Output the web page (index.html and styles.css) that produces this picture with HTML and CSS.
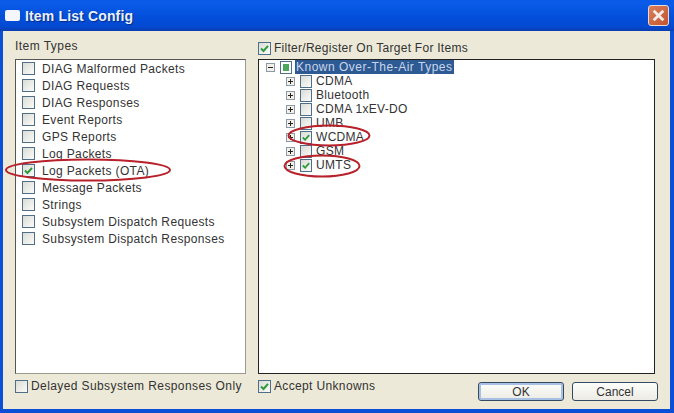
FILE: index.html
```html
<!DOCTYPE html>
<html lang="en">
<head>
  <meta charset="UTF-8" />
  <title>Item List Config</title>
  <link rel="stylesheet" href="styles.css">
</head>
<body>
  <div class="window">
    <div class="titlebar">
      <span class="title-icon"></span>
      <span class="title-text">Item List Config</span>
      <span class="close-btn">
        <svg width="15" height="15" viewBox="0 0 14 14"><path d="M2.5 2.5L11.5 11.5M11.5 2.5L2.5 11.5" stroke="#f4ece6" stroke-width="2.6"/></svg>
      </span>
    </div>

    <div class="client">
      <!-- Top labels -->
      <div class="label">Item Types</div>
      <div class="check-row top-check">
        <span class="box on"><svg width="11" height="11" viewBox="0 0 11 11"><path class="tick" d="M2 5.5L4.5 8L9 2.8"/></svg></span>
        <span>Filter/Register On Target For Items</span>
      </div>

      <!-- Item types list -->
      <div class="panel list">
        <div class="list-row"><span class="box"></span>DIAG Malformed Packets</div>
        <div class="list-row"><span class="box"></span>DIAG Requests</div>
        <div class="list-row"><span class="box"></span>DIAG Responses</div>
        <div class="list-row"><span class="box"></span>Event Reports</div>
        <div class="list-row"><span class="box"></span>GPS Reports</div>
        <div class="list-row"><span class="box"></span>Log Packets</div>
        <div class="list-row"><span class="box on"><svg width="11" height="11" viewBox="0 0 11 11"><path class="tick" d="M2 5.5L4.5 8L9 2.8"/></svg></span>Log Packets (OTA)</div>
        <div class="list-row"><span class="box"></span>Message Packets</div>
        <div class="list-row"><span class="box"></span>Strings</div>
        <div class="list-row"><span class="box"></span>Subsystem Dispatch Requests</div>
        <div class="list-row"><span class="box"></span>Subsystem Dispatch Responses</div>
      </div>

      <!-- Tree -->
      <div class="panel tree">
        <div class="tree-row root">
          <span class="exp minus"></span>
          <span class="box mixed"></span>
          <span class="selected">Known Over-The-Air Types</span>
        </div>
        <div class="tree-row"><span class="exp"></span><span class="box"></span>CDMA</div>
        <div class="tree-row"><span class="exp"></span><span class="box"></span>Bluetooth</div>
        <div class="tree-row"><span class="exp"></span><span class="box"></span>CDMA 1xEV-DO</div>
        <div class="tree-row"><span class="exp"></span><span class="box"></span>UMB</div>
        <div class="tree-row"><span class="exp"></span><span class="box on"><svg width="11" height="11" viewBox="0 0 11 11"><path class="tick" d="M2 5.5L4.5 8L9 2.8"/></svg></span>WCDMA</div>
        <div class="tree-row"><span class="exp"></span><span class="box"></span>GSM</div>
        <div class="tree-row"><span class="exp"></span><span class="box on"><svg width="11" height="11" viewBox="0 0 11 11"><path class="tick" d="M2 5.5L4.5 8L9 2.8"/></svg></span>UMTS</div>
      </div>

      <!-- Bottom row -->
      <div class="check-row bottom"><span class="box"></span><span>Delayed Subsystem Responses Only</span></div>
      <div class="footer">
        <div class="check-row accept"><span class="box on"><svg width="11" height="11" viewBox="0 0 11 11"><path class="tick" d="M2 5.5L4.5 8L9 2.8"/></svg></span><span>Accept Unknowns</span></div>
        <div class="buttons">
          <button class="default">OK</button>
          <button>Cancel</button>
        </div>
      </div>
    </div>

    <!-- Red hand-drawn markup over the dialog -->
    <svg class="markup" width="674" height="413" viewBox="0 0 674 413">
      <ellipse cx="88" cy="170" rx="82" ry="10.5"/>
      <ellipse cx="329" cy="135.5" rx="40.5" ry="10"/>
      <ellipse cx="322" cy="166" rx="37.5" ry="10.5"/>
    </svg>
  </div>
</body>
</html>
```

FILE: styles.css
```css
* {
  box-sizing: border-box;
}

body {
  margin: 0;
  font-family: "Liberation Sans", Arial, sans-serif;
  font-size: 12px;
  letter-spacing: 0.45px;
  color: #333;
}

.window {
  position: relative;
  width: 674px;
  height: 413px;
  display: flex;
  flex-direction: column;
  background: #0a4fd6;
  padding: 0 4px 4px 3px;
  overflow: hidden;
}

.titlebar {
  height: 31px;
  margin: 0 -4px 0 -3px;
  padding: 0 5px 0 5px;
  display: flex;
  align-items: center;
  background: linear-gradient(#0a5ae6, #0a5be8 12%, #0350dc 50%, #0349d2 85%, #0a3fb0);
}

.title-icon {
  width: 15px;
  height: 11px;
  background: #f4f6fb;
  border-radius: 2px;
  margin-right: 5px;
}

.title-text {
  flex: 1;
  color: #e8f0fc;
  font-size: 14px;
  font-weight: bold;
  letter-spacing: 0.15px;
  text-shadow: 1px 1px 1px #0a2a80;
}

.close-btn {
  width: 21px;
  height: 21px;
  display: flex;
  align-items: center;
  justify-content: center;
  background: linear-gradient(135deg, #d8805c, #c4532f);
  border: 1px solid #e8dcd4;
  border-radius: 3px;
}

.client {
  flex: 1;
  display: grid;
  grid-template-columns: 231px 397px;
  grid-template-rows: 20px 315px 1fr;
  column-gap: 12px;
  padding: 8px 15px 0 12px;
  background: #ece9d8;
}

.label {
  line-height: 14px;
}

.check-row {
  display: flex;
  align-items: center;
  height: 18px;
  gap: 3px;
}

.top-check {
  letter-spacing: 0.27px;
}

.accept {
  letter-spacing: 0.35px;
}

.box {
  flex: none;
  width: 13px;
  height: 13px;
  display: inline-flex;
  align-items: center;
  justify-content: center;
  background: linear-gradient(135deg, #dcdcd6, #fafaf8);
  border: 1px solid #4f6f88;
}

.tick {
  fill: none;
  stroke: #2f9a3a;
  stroke-width: 2;
}

.panel {
  background: #fff;
  border: 1px solid #555;
  border-right-color: #9a9a90;
  border-bottom-color: #9a9a90;
}

.list {
  letter-spacing: 0.35px;
}

.list-row {
  height: 17px;
  display: flex;
  align-items: center;
  gap: 7px;
  padding-left: 6px;
}

.tree {
  border-color: #222;
  letter-spacing: 0.3px;
}

.tree-row {
  height: 14px;
  display: flex;
  align-items: center;
  gap: 4px;
  padding-left: 27px;
}

.tree-row.root {
  padding-left: 7px;
  gap: 3px;
}

.tree-row .box {
  width: 12px;
  height: 13px;
}

.tree-row svg {
  width: 10px;
}

.exp {
  position: relative;
  flex: none;
  width: 9px;
  height: 9px;
  margin-right: 1px;
  background: #f2f0e8;
  border: 1px solid #8a9aa8;
}

.exp::before,
.exp::after {
  content: "";
  position: absolute;
  background: #222;
}

.exp::before {
  left: 1px;
  right: 1px;
  top: 3px;
  height: 1px;
}

.exp::after {
  top: 1px;
  bottom: 1px;
  left: 3px;
  width: 1px;
}

.exp.minus::after {
  display: none;
}

.box.mixed {
  background: #fff;
  box-shadow: inset 0 0 0 2px #fff, inset 0 0 0 7px #4aa65a;
}

.root .exp {
  margin-right: 2px;
}

.selected {
  background: #2e5a94;
  color: #c8d6ea;
  padding: 0 1px;
  line-height: 14px;
  letter-spacing: 0.5px;
}

.bottom {
  margin-top: 3px;
  letter-spacing: 0.4px;
}

.footer {
  display: flex;
  justify-content: space-between;
  align-items: flex-start;
  margin-right: -3px;
  padding-top: 3px;
}

.buttons {
  display: flex;
  gap: 8px;
  margin-top: 5px;
}

button {
  width: 86px;
  height: 19px;
  padding: 0;
  font: inherit;
  color: #333;
  background: linear-gradient(#fdfdfb, #ecebe4);
  border: 1px solid #334a60;
  border-radius: 3px;
}

button.default {
  box-shadow: inset 0 0 0 2px #a8c0e4;
}

.markup {
  position: absolute;
  left: 0;
  top: 0;
  pointer-events: none;
}

.markup ellipse {
  fill: none;
  stroke: #b8202a;
  stroke-width: 2;
}
```
